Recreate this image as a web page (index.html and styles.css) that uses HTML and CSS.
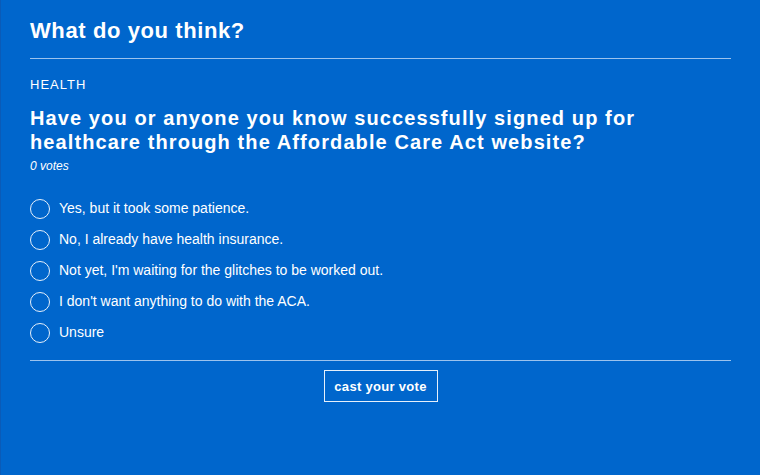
FILE: index.html
```html
<!DOCTYPE html>
<html lang="en">
  <head>
    <meta charset="UTF-8" />
    <title>What do you think?</title>
    <link rel="stylesheet" href="styles.css">
  </head>
  <body>
    <div class="poll">
      <h1 class="poll-title">What do you think?</h1>

      <div class="poll-body">
        <div class="category">HEALTH</div>
        <h2 class="question">
          Have you or anyone you know successfully signed up for healthcare
          through the Affordable Care Act website?
        </h2>
        <div class="votes">0 votes</div>

        <ul class="options">
          <li class="option"><span class="radio"></span>Yes, but it took some patience.</li>
          <li class="option"><span class="radio"></span>No, I already have health insurance.</li>
          <li class="option"><span class="radio"></span>Not yet, I'm waiting for the glitches to be worked out.</li>
          <li class="option"><span class="radio"></span>I don't want anything to do with the ACA.</li>
          <li class="option"><span class="radio"></span>Unsure</li>
        </ul>
      </div>

      <div class="poll-footer">
        <button class="vote-button">cast your vote</button>
      </div>
    </div>
  </body>
</html>
```

FILE: styles.css
```css
* {
  margin: 0;
  padding: 0;
  box-sizing: border-box;
}

html,
body {
  height: 100%;
}

body {
  font-family: "Liberation Sans", Arial, sans-serif;
  background: #0066cc;
  color: #fff;
  border-left: 1px solid #0a5bb8;
}

.poll {
  padding: 0 29px 0 29px;
}

.poll-title {
  font-size: 22px;
  font-weight: bold;
  letter-spacing: 0.6px;
  padding-top: 17px;
  padding-bottom: 13px;
  line-height: 28px;
  border-bottom: 1px solid #9cc3ee;
}

.poll-body {
  padding-top: 18px;
  padding-bottom: 17px;
  border-bottom: 1px solid #9cc3ee;
}

.category {
  font-size: 13px;
  letter-spacing: 1px;
  line-height: 16px;
}

.question {
  font-size: 20px;
  font-weight: bold;
  letter-spacing: 1.1px;
  line-height: 24px;
  margin-top: 13px;
}

.votes {
  font-size: 12px;
  font-style: italic;
  line-height: 14px;
  margin-top: 5px;
}

.options {
  list-style: none;
  margin-top: 25px;
  display: flex;
  flex-direction: column;
  gap: 10px;
}

.option {
  display: flex;
  align-items: center;
  gap: 9px;
  font-size: 14px;
  line-height: 21px;
}

.radio {
  width: 20px;
  height: 20px;
  border: 1px solid #e6f0fb;
  border-radius: 50%;
}

.poll-footer {
  display: flex;
  justify-content: center;
  padding-top: 9px;
}

.vote-button {
  font-family: "Liberation Sans", Arial, sans-serif;
  font-size: 13px;
  font-weight: bold;
  letter-spacing: 0.3px;
  color: #fff;
  background: transparent;
  border: 1px solid #e6f0fb;
  width: 114px;
  height: 32px;
}
```
